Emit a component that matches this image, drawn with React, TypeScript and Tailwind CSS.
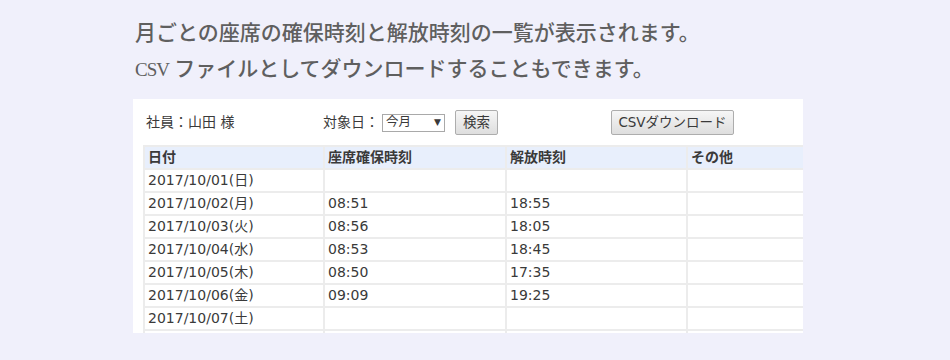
import React from "react";

interface Row {
  date: string;
  start?: string;
  end?: string;
}

const rows: Row[] = [
  { date: "2017/10/01(日)" },
  { date: "2017/10/02(月)", start: "08:51", end: "18:55" },
  { date: "2017/10/03(火)", start: "08:56", end: "18:05" },
  { date: "2017/10/04(水)", start: "08:53", end: "18:45" },
  { date: "2017/10/05(木)", start: "08:50", end: "17:35" },
  { date: "2017/10/06(金)", start: "09:09", end: "19:25" },
  { date: "2017/10/07(土)" },
  { date: "" },
];

const sans = "font-['Verdana','DejaVu_Sans','Noto_Sans_CJK_JP',sans-serif]";
const cell = "border-2 border-[#ececec] px-[3px] py-0";

export default function App() {
  return (
    <div className="w-[950px] h-[360px] bg-[#f0f0fb] overflow-hidden">
      <div className="pl-[135px] pt-[15px] text-[#5f5f5f] text-[21px] leading-[36px] font-medium font-['Liberation_Serif','Noto_Sans_CJK_JP',serif]">
        <p>月ごとの座席の確保時刻と解放時刻の一覧が表示されます。</p>
        <p>
          <span className="inline-block tracking-[-1px] text-[19px]">CSV</span> ファイルとしてダウンロードすることもできます。
        </p>
      </div>
      <div className={`ml-[133px] mt-[11px] w-[670px] h-[234px] bg-white overflow-hidden text-[#3a3a3a] ${sans}`}>
        <div className="flex items-center h-[46px] pl-[13px] pt-[1px] text-[13px]">
          <span className="w-[177px] text-[14px]">社員：山田 様</span>
          <span className="text-[14px]">対象日：</span>
          <div className="ml-[3px] w-[63px] h-[18px] border border-[#a9a9a9] flex items-center justify-between px-[3px] text-[12.5px]">
            <span>今月</span>
            <span className="text-[9px]">▼</span>
          </div>
          <button className="ml-[10px] w-[43px] h-[25px] border border-[#adadad] rounded-[2px] bg-gradient-to-b from-[#f6f6f6] to-[#dedede] text-[13.5px]">
            検索
          </button>
          <button className="ml-[113px] w-[123px] h-[25px] border border-[#adadad] rounded-[2px] bg-gradient-to-b from-[#f6f6f6] to-[#dedede] text-[13.5px] whitespace-nowrap">
            CSVダウンロード
          </button>
        </div>
        <table className="ml-[10px] w-[760px] border-collapse table-fixed text-[14px] leading-[19px]">
          <colgroup>
            <col className="w-[180px]" />
            <col className="w-[182px]" />
            <col className="w-[181px]" />
            <col />
          </colgroup>
          <thead>
            <tr className="bg-[#e8effc] h-[23px]">
              {["日付", "座席確保時刻", "解放時刻", "その他"].map((h) => (
                <th key={h} className={`${cell} text-left font-bold text-[14px]`}>
                  {h}
                </th>
              ))}
            </tr>
          </thead>
          <tbody>
            {rows.map((r, i) => (
              <tr key={i} className="h-[23px]">
                <td className={cell}>{r.date}</td>
                <td className={cell}>{r.start}</td>
                <td className={cell}>{r.end}</td>
                <td className={cell}></td>
              </tr>
            ))}
          </tbody>
        </table>
      </div>
    </div>
  );
}
